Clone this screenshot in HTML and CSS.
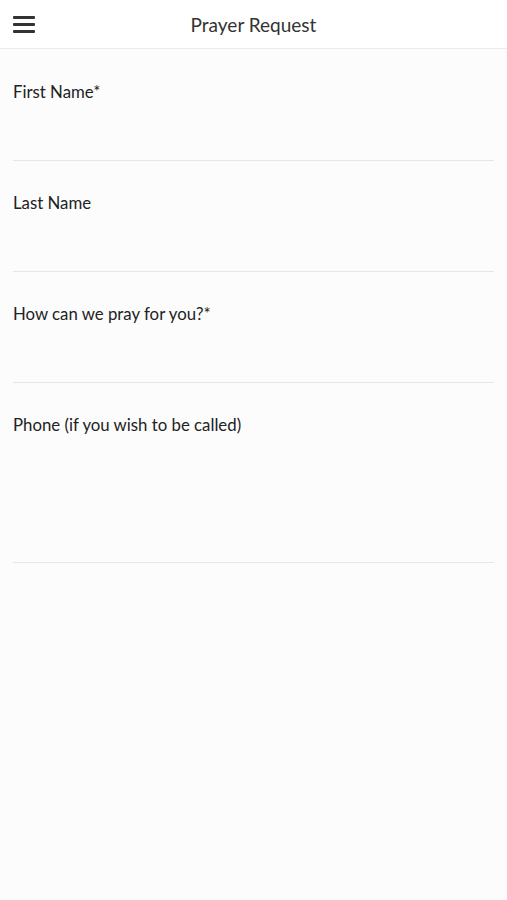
FILE: index.html
```html
<!DOCTYPE html>
<html lang="en">
<head>
    <meta charset="UTF-8">
    <meta name="viewport" content="width=device-width, initial-scale=1.0">
    <title>Prayer Request</title>
    <link rel="stylesheet" href="styles.css">
</head>
<body>
    <header class="topbar">
        <button class="menu-btn" aria-label="Menu">
            <svg width="22" height="18" viewBox="0 0 22 18">
                <rect x="0" y="1" width="22" height="3" rx="1" fill="#333"/>
                <rect x="0" y="8" width="22" height="3" rx="1" fill="#333"/>
                <rect x="0" y="15" width="22" height="3" rx="1" fill="#333"/>
            </svg>
        </button>
        <h1 class="title">Prayer Request</h1>
    </header>

    <form class="request-form">
        <div class="field">
            <label for="firstName">First Name*</label>
            <input type="text" id="firstName">
        </div>
        <div class="field">
            <label for="lastName">Last Name</label>
            <input type="text" id="lastName">
        </div>
        <div class="field">
            <label for="request">How can we pray for you?*</label>
            <input type="text" id="request">
        </div>
        <div class="field field-tall">
            <label for="phone">Phone (if you wish to be called)</label>
            <input type="tel" id="phone">
        </div>
    </form>
</body>
</html>
```
FILE: styles.css
```css
body {
    margin: 0;
    font-family: Lato, "Open Sans", sans-serif;
    background-color: #fcfcfc;
    color: #333;
}

.topbar {
    height: 48px;
    background-color: #fff;
    border-bottom: 1px solid #ececec;
    display: flex;
    align-items: center;
    justify-content: center;
    position: relative;
}

.menu-btn {
    position: absolute;
    left: 13px;
    top: 15px;
    padding: 0;
    border: none;
    background: none;
    line-height: 0;
}

.title {
    margin: 0;
    font-size: 19px;
    font-weight: 400;
    color: #333;
}

.request-form {
    padding: 1px 13px 0;
}

.field {
    display: flex;
    flex-direction: column;
    border-bottom: 1px solid #e6e6e6;
    height: 111px;
    box-sizing: border-box;
    padding-top: 31px;
}

.field-tall {
    height: 180px;
}

.field label {
    font-size: 16.8px;
    color: #222;
}

.field input {
    border: none;
    outline: none;
    background: transparent;
    padding: 0;
    font: inherit;
}
```
